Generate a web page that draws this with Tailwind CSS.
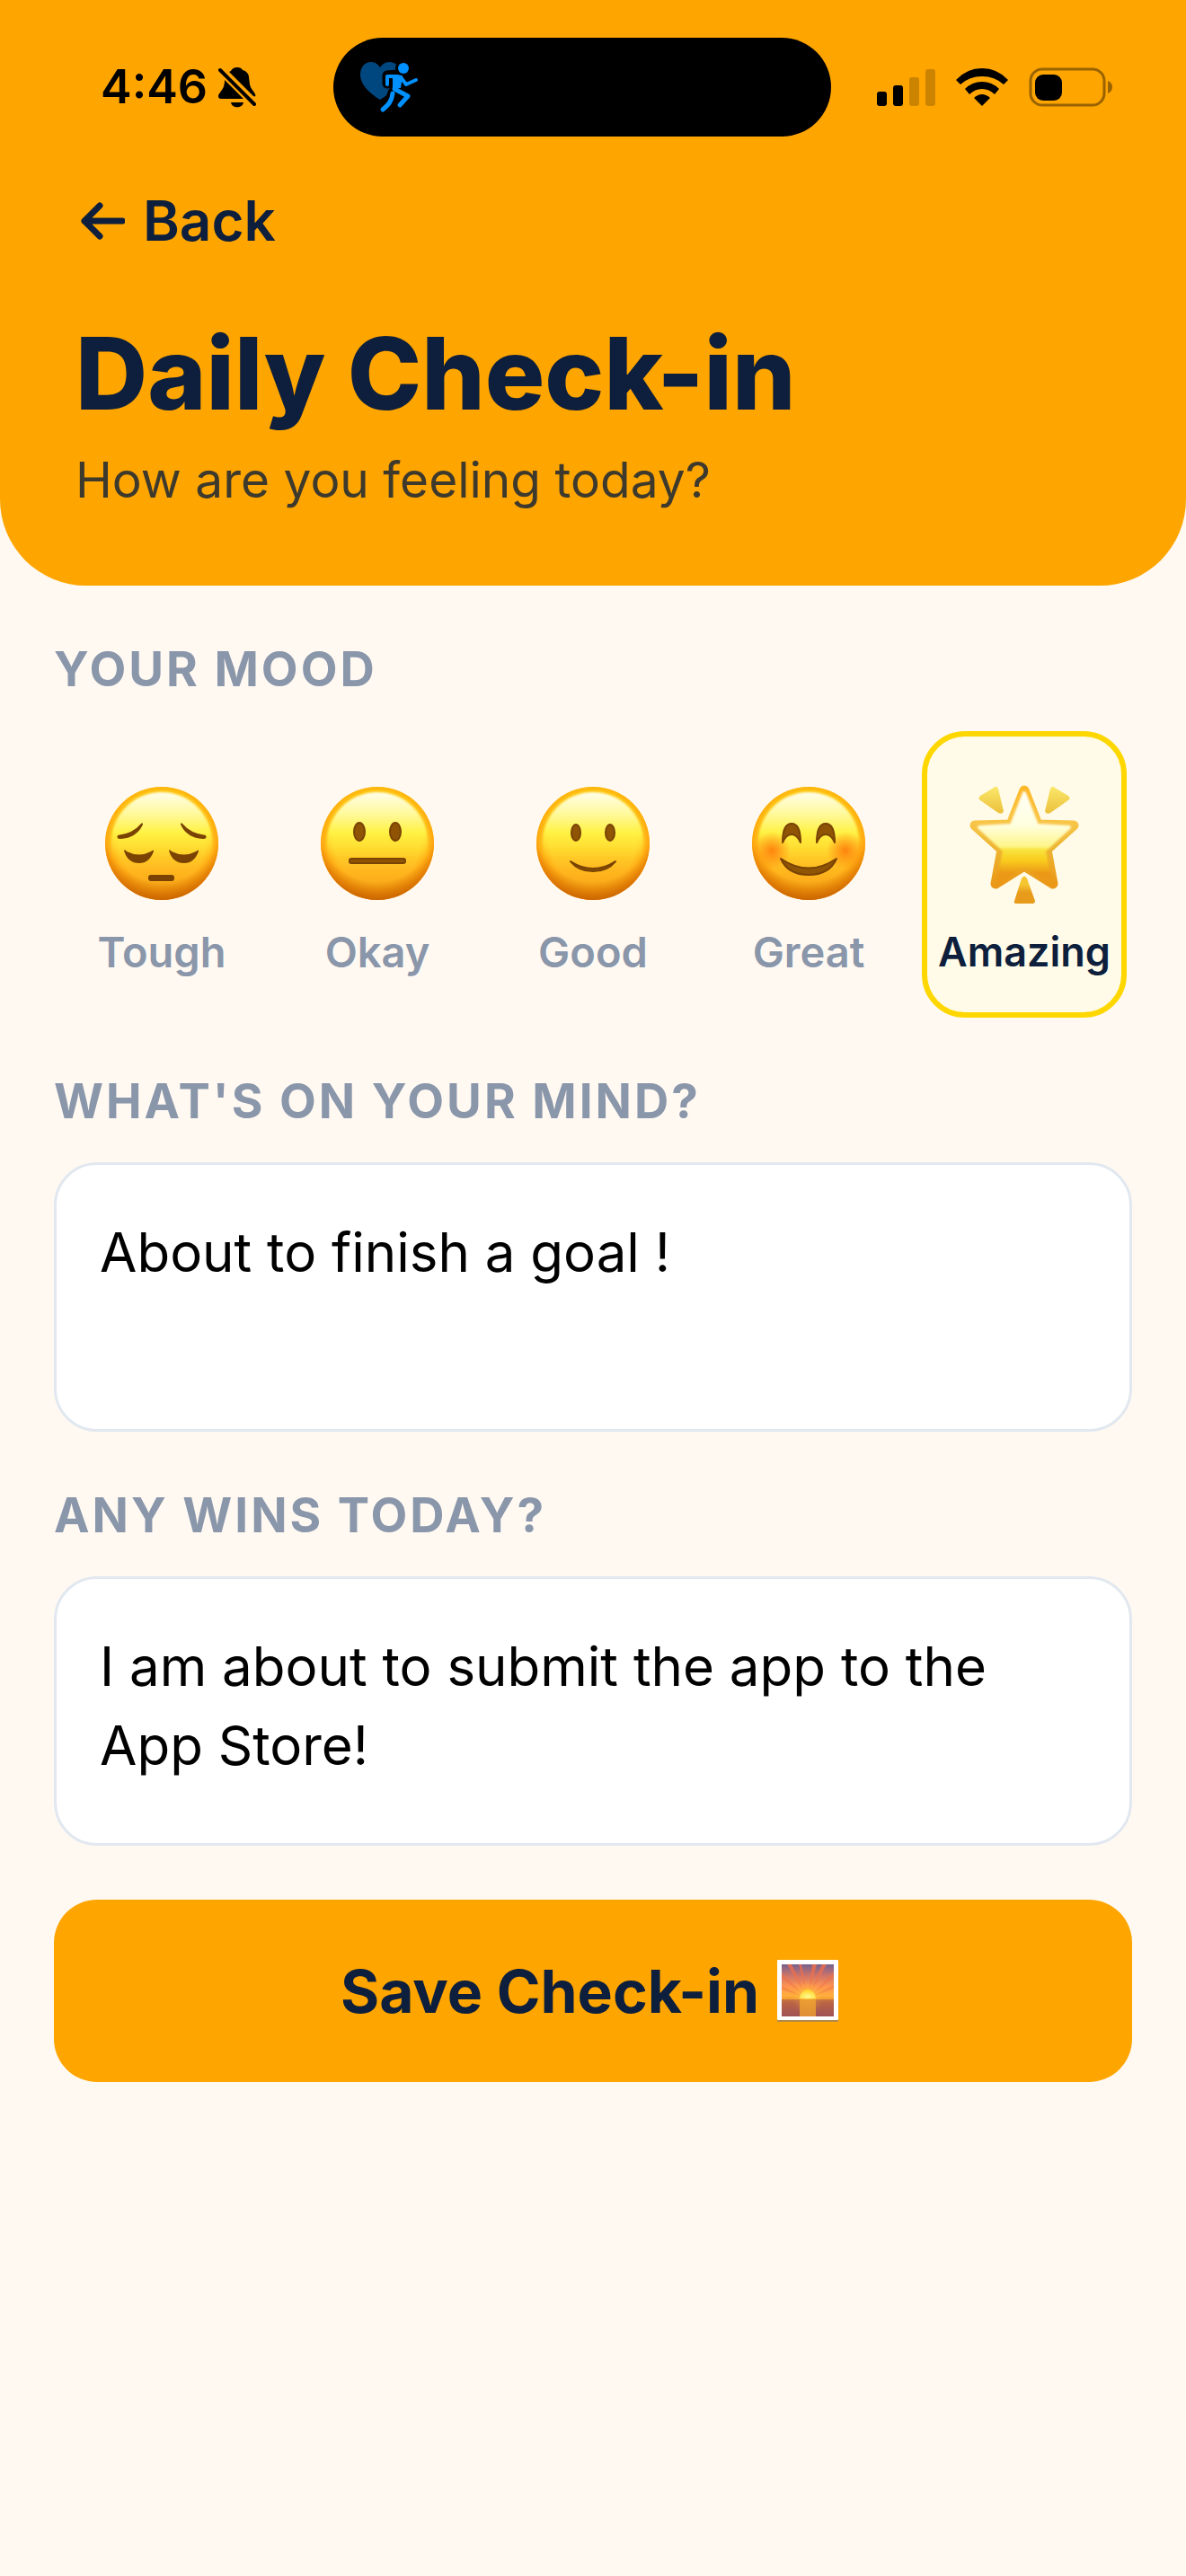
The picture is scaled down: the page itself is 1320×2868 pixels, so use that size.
<!DOCTYPE html>
<html lang="en">
<head>
  <meta charset="UTF-8">
  <title>Daily Check-in</title>
  <meta name="viewport" content="width=device-width, initial-scale=1">
  <script src="https://cdn.jsdelivr.net/npm/@tailwindcss/browser@4"></script>
</head>

<body class="min-h-screen bg-[#fff9f2] font-['Inter',sans-serif] text-[#0d1f3c]">
  <!-- shared gradients and the yellow face -->
  <svg class="absolute w-0 h-0" aria-hidden="true">
    <defs>
      <linearGradient id="faceBase" x1="0" y1="0" x2="0" y2="1">
        <stop offset="0" stop-color="#ffe61a" />
        <stop offset=".5" stop-color="#ffdc30" />
        <stop offset=".75" stop-color="#ffb61e" />
        <stop offset="1" stop-color="#f39a12" />
      </linearGradient>
      <radialGradient id="faceRim" cx=".5" cy=".48" r=".53">
        <stop offset=".72" stop-color="#ff9500" stop-opacity="0" />
        <stop offset="1" stop-color="#ff8a00" stop-opacity=".9" />
      </radialGradient>
      <radialGradient id="faceShade" cx=".5" cy=".32" r=".7">
        <stop offset=".74" stop-color="#c06000" stop-opacity="0" />
        <stop offset="1" stop-color="#b85800" stop-opacity=".85" />
      </radialGradient>
      <linearGradient id="faceShine" x1="0" y1="0" x2="0" y2="1">
        <stop offset="0" stop-color="#fffeea" />
        <stop offset=".22" stop-color="#fff99a" />
        <stop offset=".4" stop-color="#fff245" />
        <stop offset=".65" stop-color="#ffdf30" stop-opacity="0" />
      </linearGradient>
      <filter id="soft" x="-10%" y="-10%" width="120%" height="120%"><feGaussianBlur stdDeviation="1" /></filter>
      <radialGradient id="blush">
        <stop offset="0" stop-color="#ff7a0a" stop-opacity=".9" />
        <stop offset="1" stop-color="#ff7a0a" stop-opacity="0" />
      </radialGradient>
      <g id="face">
        <circle cx="63" cy="63" r="63" fill="url(#faceBase)" />
        <circle cx="63" cy="63" r="63" fill="url(#faceRim)" />
        <circle cx="63" cy="63" r="63" fill="url(#faceShade)" />
        <ellipse cx="63" cy="62" rx="56" ry="56" fill="url(#faceShine)" filter="url(#soft)" />
      </g>
    </defs>
  </svg>

  <header class="bg-[#ffa500] rounded-b-[96px] pb-[82px]">
    <!-- status bar -->
    <div class="grid grid-cols-[371fr_554px_395fr] items-center pt-[42px]">
      <div class="flex items-center gap-3 pl-28 text-black">
        <span class="text-[52px] leading-[64px] font-semibold">4:46</span>
        <svg class="w-[43px] h-[46px]" viewBox="0 0 43 46" aria-label="Silent mode" role="img">
          <path d="M21 1c-4 0-6 2-7 4l-2 1 27 27c2 1 3 0 2-2-1-3-5-6-6-11l-1-8c0-4-3-7-7-8-1-2-3-3-6-3Z" />
          <path d="M7 15 28 36H4c-5 0-5-4-2-7 3-4 5-7 5-14ZM14 40h14c-1 7-13 7-14 0Z" />
          <path d="M3 4 40 42" fill="none" stroke="#ffa500" stroke-width="8" />
          <path d="M2 4 40 42" fill="none" stroke="#000" stroke-width="4" stroke-linecap="round" />
        </svg>
      </div>
      <div class="flex h-[110px] items-center rounded-full bg-black pl-[29px]">
        <svg class="w-[66px] h-[58px]" viewBox="0 0 66 58" fill="none" aria-hidden="true">
          <path d="M23 43C15 38 1 28 1 15 1 7 6 1 13 1c5 0 8 3 10 6 2-3 6-6 10-6 7 0 13 5 13 14 0 13-15 23-23 28Z" fill="#004780" />
          <path d="M31 25v-9l12-1 6 11 12-5M42 17l-3 14 13 8-7 10M37 35l-3 10-9 10" stroke="#000" stroke-width="11" stroke-linecap="round" stroke-linejoin="round" />
          <circle cx="49" cy="8" r="9" fill="#000" />
          <circle cx="49" cy="8" r="6" fill="#0091ff" />
          <path d="M31 26v-9h9l6 1 6 8 11-5" stroke="#0091ff" stroke-width="4" stroke-linecap="round" stroke-linejoin="round" />
          <path d="m42 18-3 13 15 8-9 10" stroke="#0091ff" stroke-width="5" stroke-linecap="round" stroke-linejoin="round" />
          <path d="m37 15 11 1-2 14-9 1Z" fill="#0091ff" />
          <path d="M37 36c-1 9-5 13-11 18" stroke="#0091ff" stroke-width="5" stroke-linecap="round" />
        </svg>
      </div>
      <div class="flex items-center gap-[23px] pl-[51px]">
        <svg class="w-[65px] h-[42px]" viewBox="0 0 65 42" aria-label="Signal" role="img">
          <rect y="26" width="11" height="16" rx="3" />
          <rect x="18" y="19" width="11" height="23" rx="3" />
          <rect x="36" y="10" width="11" height="32" rx="3" fill="#cc8400" />
          <rect x="54" y="1" width="11" height="41" rx="3" fill="#cc8400" />
        </svg>
        <svg class="w-[58px] h-[42px]" viewBox="0 0 58 42" aria-label="Wi-Fi" role="img">
          <path d="M0 13Q12 0 29 0t29 13l-5 5Q43 9 29 9T5 18Z" />
          <path d="M10 23q8-8 19-8t19 8l-5 6q-6-6-14-6t-14 6Z" />
          <path d="M20 33q9-8 18 0l-9 9Z" />
        </svg>
        <svg class="w-[94px] h-[44px]" viewBox="0 0 94 44" aria-label="Battery" role="img">
          <rect x="2" y="2" width="82" height="40" rx="13" fill="none" stroke="#996300" stroke-width="3" />
          <rect x="7" y="8" width="30" height="29" rx="9" />
          <path d="M88 15q5 2 5 7t-5 7Z" fill="#996300" />
        </svg>
      </div>
    </div>

    <div class="px-[84px] pt-[54px]">
      <button class="flex items-center gap-5 text-[62px] leading-[80px] font-semibold">
        <svg class="ml-[6px] w-[49px] h-[42px]" viewBox="0 0 49 42" fill="none" stroke="currentColor" stroke-width="7" stroke-linecap="round" stroke-linejoin="round" aria-hidden="true">
          <path d="M46 21H4M21 4 4 21l17 17" />
        </svg>
        Back
      </button>
      <h1 class="mt-[60px] text-[111px] leading-[140px] font-extrabold">Daily Check-in</h1>
      <p class="mt-3 text-[55px] leading-[72px] text-[#3d3a2d]">How are you feeling today?</p>
    </div>
  </header>

  <main class="px-[60px] pt-[60px]">
    <fieldset>
      <legend class="text-[53px] leading-[66px] font-bold tracking-[3px] text-[#8a96aa]">YOUR MOOD</legend>
      <div class="mt-9 grid grid-cols-5 text-[47px] leading-[56px] font-semibold text-[#8a96aa]">
        <label class="mx-[6px] flex h-[319px] flex-col items-center rounded-[48px] border-[6px] border-transparent pt-[56px]">
          <input type="radio" name="mood" value="tough" class="sr-only">
          <svg class="w-[126px] h-[126px]" viewBox="0 0 126 126" aria-hidden="true">
            <use href="#face" />
            <g fill="#7a4304">
              <path d="M14 54q17-2 26-13 2-2 2 1-7 15-25 16-5 0-3-4ZM112 54q-17-2-26-13-2-2-2 1 7 15 25 16 5 0 3-4Z" />
              <path d="M21 71q1-2 3 1 14 7 27 0 3-3 3 0-5 13-16 13-13 0-17-14ZM71 71q1-2 3 1 14 7 27 0 3-3 3 0-5 13-16 13-13 0-17-14Z" />
              <rect x="48" y="98" width="29" height="7" rx="3" />
            </g>
          </svg>
          <span class="mt-[30px]">Tough</span>
        </label>
        <label class="mx-[6px] flex h-[319px] flex-col items-center rounded-[48px] border-[6px] border-transparent pt-[56px]">
          <input type="radio" name="mood" value="okay" class="sr-only">
          <svg class="w-[126px] h-[126px]" viewBox="0 0 126 126" aria-hidden="true">
            <use href="#face" />
            <g fill="#8f5505" stroke="#7a4304" stroke-width="2">
              <ellipse cx="43" cy="50" rx="6" ry="10" />
              <ellipse cx="83" cy="50" rx="6" ry="10" />
              <rect x="32" y="80" width="62" height="5" rx="2" />
            </g>
          </svg>
          <span class="mt-[30px]">Okay</span>
        </label>
        <label class="mx-[6px] flex h-[319px] flex-col items-center rounded-[48px] border-[6px] border-transparent pt-[56px]">
          <input type="radio" name="mood" value="good" class="sr-only">
          <svg class="w-[126px] h-[126px]" viewBox="0 0 126 126" aria-hidden="true">
            <use href="#face" />
            <g fill="#8f5505" stroke="#7a4304" stroke-width="2">
              <ellipse cx="44" cy="51" rx="5" ry="9" />
              <ellipse cx="82" cy="51" rx="5" ry="9" />
              <path d="M38 83q25 16 50 0-9 11-25 11T38 83Z" stroke-linejoin="round" />
            </g>
          </svg>
          <span class="mt-[30px]">Good</span>
        </label>
        <label class="mx-[6px] flex h-[319px] flex-col items-center rounded-[48px] border-[6px] border-transparent pt-[56px]">
          <input type="radio" name="mood" value="great" class="sr-only">
          <svg class="w-[126px] h-[126px]" viewBox="0 0 126 126" aria-hidden="true">
            <use href="#face" />
            <circle cx="22" cy="71" r="21" fill="url(#blush)" />
            <circle cx="104" cy="71" r="21" fill="url(#blush)" />
            <g fill="#8f5505" stroke="#7a4304" stroke-width="2" stroke-linejoin="round">
              <path d="M34 62q0-21 10-21t10 21q-4-9-10-9t-10 9ZM72 62q0-21 10-21t10 21q-4-9-10-9t-10 9Z" />
              <path d="M32 80q31 21 62 0-8 18-31 18T32 80Z" />
            </g>
          </svg>
          <span class="mt-[30px]">Great</span>
        </label>
        <label class="mx-[6px] flex h-[319px] flex-col items-center rounded-[48px] border-[6px] border-[#ffd700] bg-[#fffbe8] pt-[52px] text-[45px] text-[#0d1f3c]">
          <input type="radio" name="mood" value="amazing" class="sr-only" checked>
          <svg class="w-[126px] h-[136px]" viewBox="0 0 126 136" aria-hidden="true">
            <defs>
              <linearGradient id="starEdge" x1="0" y1="0" x2="0" y2="1">
                <stop offset="0" stop-color="#ffb828" />
                <stop offset=".35" stop-color="#f8c548" />
                <stop offset=".6" stop-color="#edb634" />
                <stop offset="1" stop-color="#eb9818" />
              </linearGradient>
              <linearGradient id="starFill" x1="0" y1="0" x2="0" y2="1">
                <stop offset="0" stop-color="#fffff4" />
                <stop offset=".36" stop-color="#ffffe0" />
                <stop offset=".6" stop-color="#fff58a" />
                <stop offset=".63" stop-color="#f9e540" />
                <stop offset=".76" stop-color="#f9cb1c" />
                <stop offset=".9" stop-color="#eb9818" />
              </linearGradient>
              <linearGradient id="ray" x1="0" y1="0" x2="0" y2="1">
                <stop offset="0" stop-color="#fbe86a" />
                <stop offset="1" stop-color="#ecc03c" />
              </linearGradient>
              <linearGradient id="rayDown" x1="0" y1="0" x2="0" y2="1">
                <stop offset=".3" stop-color="#f5c532" />
                <stop offset=".6" stop-color="#e89b1b" />
              </linearGradient>
            </defs>
            <path d="m63 8 15 38 40 1-30 27 7 38-32-20-32 20 7-38L8 47l40-1Z" fill="url(#starEdge)" stroke="url(#starEdge)" stroke-width="11" stroke-linejoin="round" />
            <path d="m63 11 14 36 36 2-28 26 7 35-29-18-29 18 7-35-28-26 36-2Z" fill="url(#starFill)" stroke="url(#starFill)" stroke-width="4" stroke-linejoin="round" filter="url(#soft)" />
            <path d="M29 5q3-3 5 1l6 25q-1 4-6 2L14 19q-3-2 0-5ZM97 5q-3-3-5 1l-6 25q1 4 6 2l20-14q3-2 0-5Z" fill="url(#ray)" />
            <path d="M60 106q3-5 6 0l9 25q0 3-3 3H54q-3 0-2-3Z" fill="url(#rayDown)" />
          </svg>
          <span class="mt-6">Amazing</span>
        </label>
      </div>
    </fieldset>

    <label for="mind" class="mt-[60px] block text-[53px] leading-[66px] font-bold tracking-[3px] text-[#8a96aa]">WHAT'S ON YOUR MIND?</label>
    <textarea id="mind" class="mt-[35px] block h-[300px] w-full resize-none overflow-hidden rounded-[48px] border-[3px] border-[#e2e8f0] bg-white px-12 pt-[53px] text-[60px] leading-[88px] text-black outline-none">About to finish a goal !</textarea>

    <label for="wins" class="mt-[60px] block text-[53px] leading-[66px] font-bold tracking-[3px] text-[#8a96aa]">ANY WINS TODAY?</label>
    <textarea id="wins" class="mt-[35px] block h-[300px] w-full resize-none overflow-hidden rounded-[48px] border-[3px] border-[#e2e8f0] bg-white px-12 pt-[53px] text-[60px] leading-[88px] text-black outline-none">I am about to submit the app to the App Store!</textarea>

    <button class="mt-[60px] flex h-[203px] w-full items-center justify-center gap-5 rounded-[48px] bg-[#ffa500] pr-2 text-[66px] leading-[80px] font-bold">
      Save Check-in
      <svg class="w-[68px] h-[69px]" viewBox="0 0 68 69" aria-hidden="true">
        <defs>
          <linearGradient id="sky" x1="0" y1="0" x2="0" y2="1">
            <stop offset="0" stop-color="#75628f" />
            <stop offset=".22" stop-color="#cf7468" />
            <stop offset=".42" stop-color="#ff9450" />
            <stop offset=".6" stop-color="#ffae3c" />
            <stop offset=".66" stop-color="#f5a030" />
            <stop offset=".74" stop-color="#cc7440" />
            <stop offset="1" stop-color="#985060" />
          </linearGradient>
          <linearGradient id="beam" x1="0" y1="0" x2="0" y2="1">
            <stop offset="0" stop-color="#e86a50" stop-opacity=".9" />
            <stop offset="1" stop-color="#f08040" stop-opacity=".4" />
          </linearGradient>
          <radialGradient id="sun" cx=".5" cy=".8" r=".8">
            <stop offset="0" stop-color="#fffb90" />
            <stop offset="1" stop-color="#ffd020" />
          </radialGradient>
          <radialGradient id="glow">
            <stop offset="0" stop-color="#ffd23c" />
            <stop offset="1" stop-color="#ffb040" stop-opacity="0" />
          </radialGradient>
        </defs>
        <rect y="2" width="68" height="67" rx="1" fill="#b08a4a" />
        <rect width="68" height="67" rx="1" fill="#fff" />
        <rect x="5" y="5" width="58" height="58" fill="url(#sky)" />
        <path d="M34 43 5 33v-4ZM34 43 5 20v-5ZM34 43 11 5h5ZM34 43 24 5h3ZM34 43 39 5h5ZM34 43 50 5h5ZM34 43 63 14v5ZM34 43l29-15v4Z" fill="url(#beam)" />
        <circle cx="34" cy="42" r="18" fill="url(#glow)" />
        <rect x="5" y="44" width="58" height="19" fill="#a8544c" opacity=".5" />
        <rect x="25" y="44" width="18" height="19" fill="#f4a42c" opacity=".75" />
        <path d="M25 43a9 10 0 0 1 18 0Z" fill="url(#sun)" />
      </svg>
    </button>
  </main>
</body>
</html>
